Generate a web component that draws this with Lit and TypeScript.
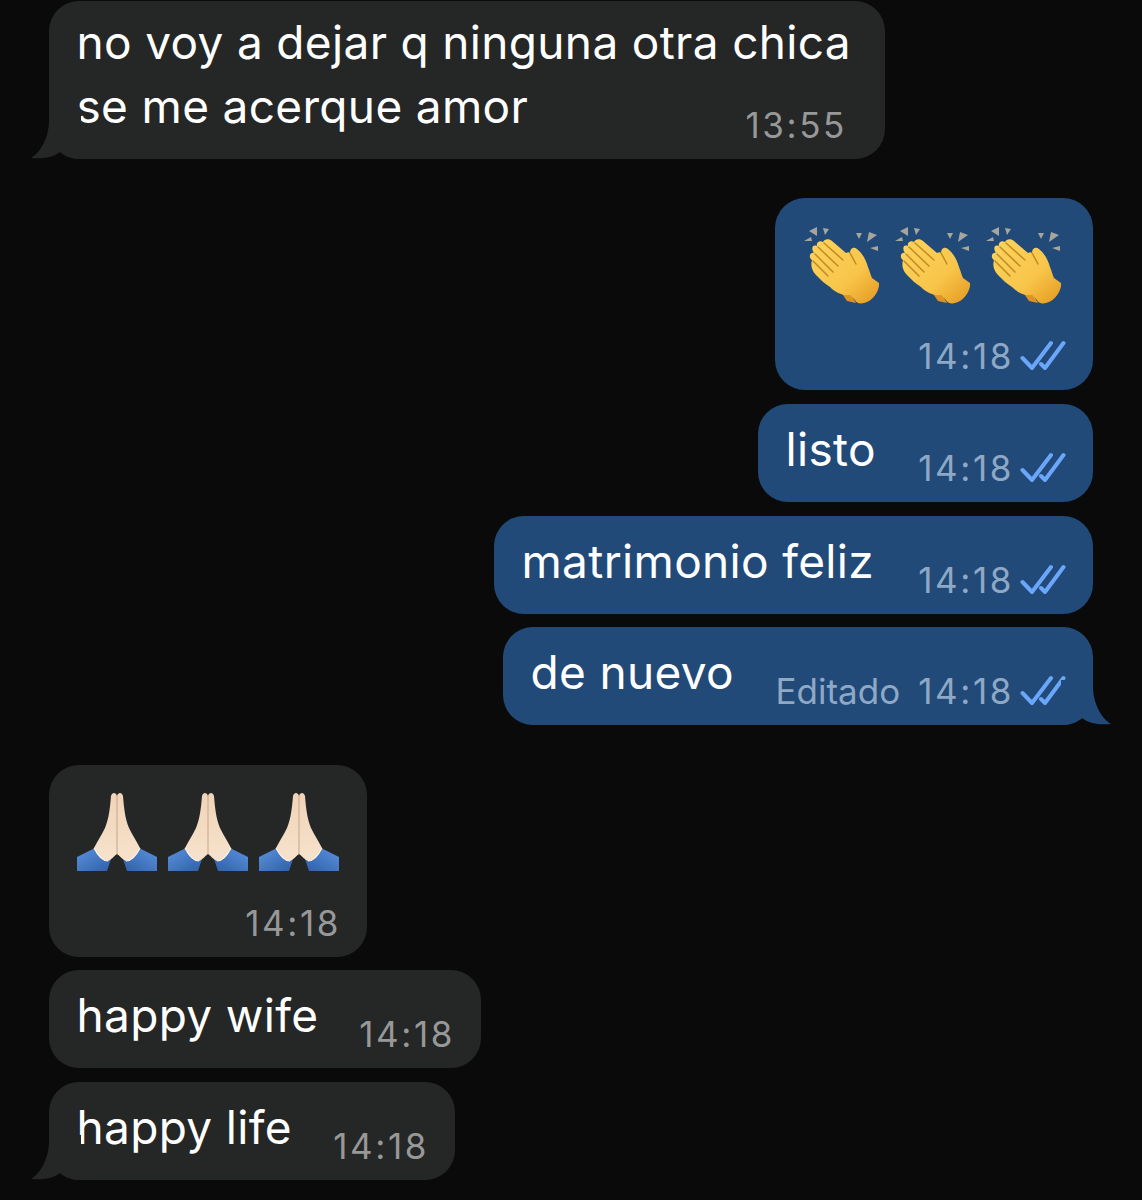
import { LitElement, css, html, svg } from 'lit';
import { customElement } from 'lit/decorators.js';

const clap = () => html`<svg class="emoji" viewBox="0 0 85 85" width="85" height="85">
  <defs>
    <linearGradient id="skin" x1="0" y1="0" x2="1" y2="1">
      <stop offset="0" stop-color="#fdd45e" />
      <stop offset="0.6" stop-color="#f8c54a" />
      <stop offset="1" stop-color="#e4981f" />
    </linearGradient>
  </defs>
  <g fill="#a8a69c">
    <path d="M9 9 L17 5 L17 14 Z" />
    <path d="M23 6 L29 7 L25 13 Z" />
    <path d="M4 19 L11 15 L12 19 Z" />
    <path d="M56 11 L62 11 L59 17 Z" />
    <path d="M67 20 L69 10 L77 13 Z" />
    <path d="M70 26 L78 24 L78 29 Z" />
  </g>
  <path fill="#dd9424" d="M38 66 L52 74 L56 81 L47 79 Z" />
  <path fill="url(#skin)" d="M12 38 C8 35 10 30 14 31 C11 27 12 22 17 24 C16 20 20 18 23 20 C24 17 29 16 32 19 L46 31 C48 30 49 30 50 31 C50 27 53 24 57 27 C63 32 66 38 68 45 C70 50 71 54 72 56 L79 61 C80 68 73 79 64 81 C60 82 56 81 55 78 L50 73 C42 74 35 70 30 65 C25 62 21 58 17 54 C13 50 10 45 12 38 Z" />
  <g fill="none" stroke="#c08a25" stroke-width="1.5" stroke-linecap="round">
    <path d="M18 25 L38 44" />
    <path d="M24 21 L43 38" />
    <path d="M15 32 L33 50" />
    <path d="M13 39 L28 54" />
    <path d="M50 31 L56 42" />
  </g>
</svg>`;

const pray = () => html`<svg class="emoji" viewBox="0 0 88 88" width="88" height="88">
  <defs>
    <linearGradient id="sleeve-l" x1="0" y1="0" x2="1" y2="1">
      <stop offset="0" stop-color="#5b92de" />
      <stop offset="1" stop-color="#2f5fa8" />
    </linearGradient>
    <linearGradient id="sleeve-r" x1="1" y1="0" x2="0" y2="1">
      <stop offset="0" stop-color="#5b92de" />
      <stop offset="1" stop-color="#2f5fa8" />
    </linearGradient>
    <linearGradient id="palm" x1="0" y1="0" x2="0" y2="1">
      <stop offset="0" stop-color="#f0d4b8" />
      <stop offset="1" stop-color="#f6e2cc" />
    </linearGradient>
  </defs>
  <path fill="url(#sleeve-l)" d="M3 69 L21 60 L37 71 L33 83 L3 83 Z" />
  <path fill="url(#sleeve-r)" d="M83 83 L83 69 L65 60 L49 71 L53 83 Z" />
  <path fill="url(#palm)" d="M43 8 C42 4 38 4 37 8 C36 20 35 30 31 40 C27 48 23 54 20 60 C24 68 29 73 34 73 C37 72 40 68 43 66 Z" />
  <path fill="url(#palm)" d="M43 8 C44 4 48 4 49 8 C50 20 51 30 55 40 C59 48 63 54 66 60 C62 68 57 73 52 73 C49 72 46 68 43 66 Z" />
  <path stroke="#cfae90" stroke-width="1.2" fill="none" d="M43 8 L43 66" />
  <path stroke="#fdf2e2" stroke-width="1.2" fill="none" d="M20 60 C24 68 29 73 34 73 M66 60 C62 68 57 73 52 73" />
</svg>`;

const ticks = () => svg`<svg class="ticks" viewBox="0 0 46 32" width="46" height="32">
  <g fill="none" stroke="#6aa6fa" stroke-width="4" stroke-linecap="round" stroke-linejoin="round">
    <path d="M2.5 18 L12 28 L31 3" />
    <path d="M21 24 L25 28 L43.5 3" />
  </g>
</svg>`;

@customElement('chat-bubble')
export class Bubble extends LitElement {
  static properties = {
    side: {},
    tail: { type: Boolean },
    time: {},
    edited: {},
  };

  static styles = css`
    :host {
      display: block;
    }

    .bubble {
      display: grid;
      grid-template-columns: minmax(0, 1fr);
      border-radius: 30px;
      padding: 11px 27px 19px 27.5px;
      box-sizing: border-box;
      background: #252626;
      color: #fff;
      position: relative;
    }

    .out {
      background: #214a78;
    }

    .cell {
      grid-area: 1 / 1;
    }

    .meta {
      align-self: end;
      justify-self: end;
      display: flex;
      align-items: center;
      gap: 6px;
      font-size: 35px;
      letter-spacing: 2.6px;
      line-height: 44px;
      color: #979898;
      margin: 0 var(--meta-inset, -1px) -7px 0;
    }

    .out .meta {
      color: #8ea8c6;
      margin-right: 0;
    }

    .edited {
      letter-spacing: 0;
      margin-right: 12px;
    }

    .ticks {
      flex: none;
    }

    .tail {
      position: absolute;
      bottom: 0;
      width: 50px;
      height: 50px;
      left: -18px;
      fill: #252626;
    }

    .tail.right {
      left: auto;
      right: -18px;
      transform: scaleX(-1);
      fill: #214a78;
    }
  `;

  declare side: string;
  declare tail: boolean;
  declare time: string;
  declare edited: string;

  constructor() {
    super();
    this.side = 'in';
    this.tail = false;
    this.time = '';
    this.edited = '';
  }

  render() {
    const out = this.side === 'out';
    return html`<div class="bubble ${this.side}">
      <div class="cell"><slot></slot></div>
      <div class="cell meta">
        ${this.edited ? html`<span class="edited">${this.edited}</span>` : ''}
        <span>${this.time}</span>
        ${out ? ticks() : ''}
      </div>
      ${this.tail
        ? svg`<svg class="tail ${out ? 'right' : 'left'}" viewBox="0 0 50 50">
            <path d="M18 5 L18 11 C18 28 10 43 0 49 C10 50 22 49 29 43 C34 47 40 50 50 50 L50 5 Z" />
          </svg>`
        : ''}
    </div>`;
  }
}

@customElement('app-root')
export class AppRoot extends LitElement {
  static styles = css`
    :host {
      display: block;
      height: 1200px;
      overflow: hidden;
      background: #0a0a0a;
      font-family: Inter, 'Liberation Sans', sans-serif;
    }

    .chat {
      display: flex;
      flex-direction: column;
      gap: 13.6px;
      padding: 0.9px 49px 0;
    }

    chat-bubble[side='out'] {
      align-self: flex-end;
    }

    chat-bubble[side='in'] {
      align-self: flex-start;
    }

    .next-group {
      margin-top: 26px;
    }

    .lead {
      --meta-inset: 11px;
    }

    .text {
      font-size: 46px;
      line-height: 68px;
      letter-spacing: 0.33px;
      white-space: nowrap;
    }

    .two-lines {
      line-height: 64px;
      margin: -2px 0 2px;
    }

    .emojis {
      display: flex;
      height: 162px;
      margin-left: -3px;
      box-sizing: border-box;
    }

    .emoji {
      flex: none;
    }

    .claps {
      gap: 6px;
      padding-top: 13px;
    }

    .prays {
      gap: 3px;
      padding-top: 12px;
    }
  `;

  render() {
    return html`<div class="chat">
      <chat-bubble class="lead" side="in" tail time="13:55" style="width: 836px">
        <div class="text two-lines">no voy a dejar q ninguna otra chica<br />se me acerque amor</div>
      </chat-bubble>

      <chat-bubble class="next-group" side="out" time="14:18" style="width: 318px">
        <div class="emojis claps">${clap()}${clap()}${clap()}</div>
      </chat-bubble>
      <chat-bubble side="out" time="14:18" style="width: 335px"><div class="text">listo</div></chat-bubble>
      <chat-bubble side="out" time="14:18" style="width: 599px"><div class="text">matrimonio feliz</div></chat-bubble>
      <chat-bubble side="out" tail time="14:18" edited="Editado" style="width: 590px">
        <div class="text">de nuevo</div>
      </chat-bubble>

      <chat-bubble class="next-group" side="in" time="14:18" style="width: 318px">
        <div class="emojis prays">${pray()}${pray()}${pray()}</div>
      </chat-bubble>
      <chat-bubble side="in" time="14:18" style="width: 432px"><div class="text">happy wife</div></chat-bubble>
      <chat-bubble side="in" tail time="14:18" style="width: 406px"><div class="text">happy life</div></chat-bubble>
    </div>`;
  }
}
